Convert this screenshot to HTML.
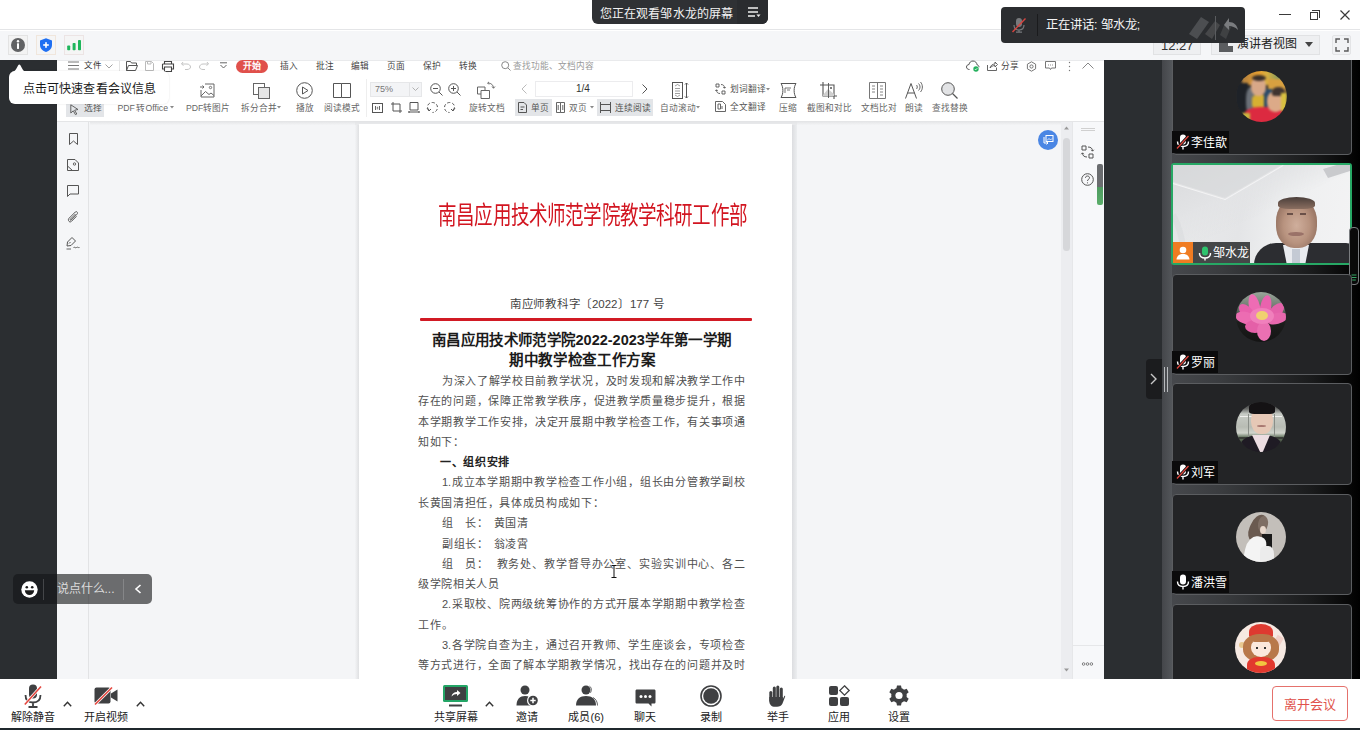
<!DOCTYPE html>
<html lang="zh-CN">
<head>
<meta charset="utf-8">
<style>
*{box-sizing:border-box}
html,body{margin:0;padding:0}
body{width:1360px;height:730px;position:relative;overflow:hidden;background:#fff;font-family:"Liberation Sans",sans-serif;color:#222}
.a{position:absolute}
.t{position:absolute;white-space:nowrap;line-height:1}
.j{text-align:justify;text-align-last:justify;white-space:nowrap}
svg{position:absolute;overflow:visible}
</style>
</head>
<body>
<!-- top white bar -->
<div class="a" style="left:0;top:0;width:1360px;height:30px;background:#fff;border-bottom:1px solid #e4e5e7"></div>
<!-- second bar -->
<div class="a" style="left:0;top:31px;width:1360px;height:29px;background:#f5f6f8"></div>

<!-- main dark -->
<div class="a" style="left:0;top:60px;width:57px;height:619px;background:#2b2e31"></div>
<div class="a" style="left:1104px;top:60px;width:58px;height:619px;background:#2b2e31"></div>


<!-- ===== top chrome ===== -->
<!-- left meeting icons -->
<div class="a" style="left:8px;top:35px;width:20px;height:20px;border:1px solid #e3e3e3;background:#f3f3f3"></div>
<svg style="left:8px;top:35px" width="20" height="20" viewBox="0 0 20 20"><circle cx="10" cy="10" r="7" fill="#616264"/><circle cx="10" cy="6.3" r="1.2" fill="#fff"/><rect x="9" y="8.3" width="2" height="5.6" fill="#fff"/></svg>
<div class="a" style="left:36px;top:35px;width:20px;height:20px;border:1px solid #f0e6dc;background:#f5f5f5"></div>
<svg style="left:36px;top:35px" width="20" height="20" viewBox="0 0 20 20"><path d="M10 3.2 L16 5.6 V10 C16 13.6 13.2 15.8 10 17 C6.8 15.8 4 13.6 4 10 V5.6 Z" fill="#1f6ff2"/><rect x="9.2" y="7.2" width="1.6" height="5.6" fill="#fff"/><rect x="7.2" y="9.2" width="5.6" height="1.6" fill="#fff"/></svg>
<div class="a" style="left:64px;top:35px;width:20px;height:20px;border:1px solid #ece4e4;background:#f5f5f5"></div>
<svg style="left:64px;top:35px" width="20" height="20" viewBox="0 0 20 20"><rect x="3.2" y="10.5" width="3" height="4.8" rx="0.8" fill="#1fb65c"/><rect x="8.6" y="8" width="3" height="7.3" rx="0.8" fill="#1fb65c"/><rect x="14" y="5" width="3" height="10.3" rx="0.8" fill="#1fb65c"/></svg>

<!-- window controls -->
<div class="a" style="left:1279px;top:14px;width:12px;height:1px;background:#3a3a3a"></div>
<div class="a" style="left:1310px;top:12px;width:8px;height:8px;border:1px solid #3a3a3a"></div>
<div class="a" style="left:1312px;top:10px;width:8px;height:8px;border-top:1px solid #3a3a3a;border-right:1px solid #3a3a3a"></div>
<svg style="left:1340px;top:10px" width="10" height="10" viewBox="0 0 10 10"><path d="M0.5 0.5 L9.5 9.5 M9.5 0.5 L0.5 9.5" stroke="#3a3a3a" stroke-width="1.2"/></svg>

<!-- time box -->
<div class="a" style="left:1153px;top:35px;width:48px;height:20px;background:#eeeff1;border:1px solid #e1e2e4"></div>
<div class="t" style="left:1161px;top:39px;font-size:13px;color:#333">12:27</div>
<!-- presenter view -->
<div class="a" style="left:1211px;top:35px;width:109px;height:20px;background:#eeeff1;border:1px solid #e1e2e4"></div>
<div class="a" style="left:1219px;top:38px;width:14px;height:14px;background:#5b5d60"></div>
<div class="a" style="left:1228px;top:38px;width:5px;height:8px;background:#eeeff1"></div>
<div class="t j" style="left:1237px;top:38px;font-size:12px;color:#222;width:59px">演讲者视图</div>
<svg style="left:1305px;top:42px" width="8" height="5" viewBox="0 0 8 5"><path d="M0 0 H8 L4 5 Z" fill="#444"/></svg>
<!-- fullscreen -->
<div class="a" style="left:1332px;top:35px;width:19px;height:20px;border:1px solid #e3e4e6;background:#f1f2f4;border-radius:2px"></div>
<svg style="left:1334px;top:37px" width="16" height="16" viewBox="0 0 16 16"><path d="M2 6 V2 H6 M10 2 H14 V6 M14 10 V14 H10 M6 14 H2 V10" stroke="#5a5a5a" stroke-width="1.4" fill="none"/></svg>

<!-- viewing pill -->
<div class="a" style="left:592px;top:0;width:176px;height:24px;background:#2f3134;border-radius:0 0 6px 6px"></div>
<div class="a" style="left:737px;top:0;width:31px;height:24px;background:#2a2c2f;border-radius:0 0 6px 0"></div>
<div class="t j" style="left:600px;top:7.5px;font-size:12px;color:#f2f2f2;width:133px">您正在观看邹水龙的屏幕</div>
<svg style="left:748px;top:7px" width="13" height="11" viewBox="0 0 13 11"><path d="M0 1 H10 M0 5 H10 M0 9 H7" stroke="#f0f0f0" stroke-width="1.3"/><path d="M8.5 7.5 H12.5 L10.5 10 Z" fill="#f0f0f0"/></svg>

<!-- speaking notice -->
<div class="a" style="left:1001px;top:7px;width:244px;height:36px;background:#2b2d30;border-radius:4px"></div>
<svg style="left:1010px;top:16px" width="18" height="18" viewBox="0 0 18 18"><rect x="6" y="2" width="6" height="9" rx="3" fill="#77797c"/><path d="M4 9 C4 12 6 14 9 14 C12 14 14 12 14 9 M9 14 V16 M6 16.2 H12" stroke="#77797c" stroke-width="1.2" fill="none"/><path d="M2.5 16 L15.5 2.5" stroke="#d8443f" stroke-width="1.4"/></svg>
<div class="a" style="left:1037px;top:14px;width:1px;height:22px;background:#1a1b1d"></div>
<div class="t j" style="left:1046px;top:19px;font-size:12.3px;color:#f4f4f4;width:94px">正在讲话: 邹水龙;</div>
<svg style="left:1187px;top:13px" width="54" height="28" viewBox="0 0 54 28"><path d="M2 21 L14 4 L22 9 L10 26 Z" fill="#4c4e51"/><path d="M18 21 L28 8 L33 12 L25 26 Z" fill="#464749"/><rect x="28" y="3" width="1" height="24" fill="#5a5c5f"/><path d="M33 22 L38 10 L44 14 L39 26 Z" fill="#3f4143"/><path d="M37 12 L42 5 L42 9 C47 9 50 12 51 17 C48 14 45 13 42 13 V17 Z" fill="#7a7c7f"/></svg>

<!-- WPS -->
<div class="a" style="left:57px;top:60px;width:1047px;height:619px;background:#f4f5f7"></div>
<!-- ===== WPS toolbar ===== -->
<div class="a" style="left:57px;top:60px;width:1047px;height:61px;background:#fff;border-top:1px solid #e9eaec"></div>
<div class="a" style="left:57px;top:121px;width:1047px;height:1px;background:#e4e5e7"></div>
<div class="a" style="left:90px;top:122px;width:982px;height:3px;background:linear-gradient(#e6e7e9,#f3f4f6)"></div>
<!-- menu row -->
<svg style="left:68px;top:61px" width="11" height="9" viewBox="0 0 11 9"><path d="M0 1 H11 M0 4.5 H11 M0 8 H11" stroke="#777" stroke-width="1"/></svg>
<div class="t j" style="left:84px;top:61px;font-size:8.5px;color:#333;width:16.5px">文件</div>
<svg style="left:105px;top:64px" width="8" height="5" viewBox="0 0 8 5"><path d="M0.5 0.5 L4 4 L7.5 0.5" stroke="#999" stroke-width="0.9" fill="none"/></svg>
<div class="a" style="left:119px;top:61px;width:1px;height:10px;background:#e4e4e4"></div>
<svg style="left:126px;top:61px" width="12" height="10" viewBox="0 0 12 10"><path d="M0.5 9.5 V0.5 H4.5 L5.5 2 H10.5 V4 M0.5 9.5 L2.5 4.5 H11.5 L9.5 9.5 Z" stroke="#555" stroke-width="1" fill="none"/></svg>
<svg style="left:145px;top:61px" width="9" height="10" viewBox="0 0 9 10"><path d="M0.5 0.5 H6.5 L8.5 2.5 V9.5 H0.5 Z M2.5 0.5 V3 H6 V0.5" stroke="#bbb" stroke-width="1" fill="none"/></svg>
<svg style="left:162px;top:61px" width="12" height="11" viewBox="0 0 12 11"><path d="M2.5 3 V0.5 H9.5 V3 M0.5 3 H11.5 V8 H9.5 M2.5 8 H0.5 V3 M2.5 6 H9.5 V10.5 H2.5 Z" stroke="#444" stroke-width="1.1" fill="none"/></svg>
<svg style="left:181px;top:61px" width="10" height="9" viewBox="0 0 10 9"><path d="M2 1 L0.5 3 L2.5 4.5 M0.8 3 H6 C8 3 9.5 4.5 9.5 6 C9.5 7.5 8 8.5 6 8.5 H4" stroke="#c4c4c4" stroke-width="1" fill="none"/></svg>
<svg style="left:199px;top:61px" width="10" height="9" viewBox="0 0 10 9"><path d="M8 1 L9.5 3 L7.5 4.5 M9.2 3 H4 C2 3 0.5 4.5 0.5 6 C0.5 7.5 2 8.5 4 8.5 H6" stroke="#c4c4c4" stroke-width="1" fill="none"/></svg>
<svg style="left:220px;top:62px" width="7" height="7" viewBox="0 0 7 7"><path d="M0 0.8 H7 M0.5 3 L3.5 6 L6.5 3" stroke="#666" stroke-width="1" fill="none"/></svg>
<div class="a" style="left:236px;top:60px;width:32px;height:13px;background:#e0504b;border-radius:7px"></div>
<div class="t j" style="left:243px;top:62px;font-size:9px;color:#fff;font-weight:bold;width:18px">开始</div>
<div class="t j" style="left:280px;top:62px;font-size:8.7px;color:#444;width:17.4px">插入</div>
<div class="t j" style="left:315.5px;top:62px;font-size:8.7px;color:#444;width:17.4px">批注</div>
<div class="t j" style="left:351px;top:62px;font-size:8.7px;color:#444;width:17.4px">编辑</div>
<div class="t j" style="left:387px;top:62px;font-size:8.7px;color:#444;width:17.4px">页面</div>
<div class="t j" style="left:423px;top:62px;font-size:8.7px;color:#444;width:17.4px">保护</div>
<div class="t j" style="left:459px;top:62px;font-size:8.7px;color:#444;width:17.4px">转换</div>
<svg style="left:501px;top:61px" width="10" height="10" viewBox="0 0 10 10"><circle cx="4.2" cy="4.2" r="3.5" stroke="#888" stroke-width="1" fill="none"/><path d="M6.8 6.8 L9.5 9.5" stroke="#888" stroke-width="1"/></svg>
<div class="t j" style="left:512.5px;top:62px;font-size:8.7px;color:#999;width:78px">查找功能、文档内容</div>
<!-- top right icons -->
<svg style="left:966px;top:60px" width="14" height="12" viewBox="0 0 14 12"><path d="M3.5 9.5 C1.5 9.5 0.5 8.3 0.5 7 C0.5 5.5 1.7 4.5 3 4.6 C3.3 2.3 5 1 7 1 C9.3 1 10.8 2.7 11 4.8 C12.3 5 13 6 13 7.2" stroke="#555" stroke-width="1" fill="none"/><circle cx="10" cy="9" r="2.7" fill="#27b15f"/><path d="M8.8 9 L9.7 9.9 L11.3 8.2" stroke="#fff" stroke-width="0.8" fill="none"/></svg>
<svg style="left:987px;top:61px" width="11" height="10" viewBox="0 0 11 10"><path d="M0.5 4 V9.5 H9.5 V6.5 M3 7 C3.5 4.5 5.5 3 8 3 V1 L10.5 3.5 L8 6 V4.5 C6 4.5 4.3 5.5 3 7 Z" stroke="#555" stroke-width="0.9" fill="none"/></svg>
<div class="t j" style="left:1001px;top:62px;font-size:8.7px;color:#444;width:17.4px">分享</div>
<svg style="left:1026px;top:61px" width="11" height="11" viewBox="0 0 11 11"><path d="M5.5 0.8 L9.6 3.2 V7.8 L5.5 10.2 L1.4 7.8 V3.2 Z" stroke="#666" stroke-width="0.9" fill="none"/><circle cx="5.5" cy="5.5" r="1.6" stroke="#666" stroke-width="0.9" fill="none"/></svg>
<svg style="left:1045px;top:61px" width="11" height="10" viewBox="0 0 11 10"><path d="M0.5 0.5 H10.5 V7 H6.5 L5.5 8.5 L4.5 7 H0.5 Z" stroke="#666" stroke-width="0.9" fill="none"/><path d="M3 4 H3.8 M5.1 4 H5.9 M7.2 4 H8" stroke="#666" stroke-width="0.9"/></svg>
<svg style="left:1068px;top:61px" width="3" height="11" viewBox="0 0 3 11"><circle cx="1.5" cy="1.5" r="0.7" fill="#777"/><circle cx="1.5" cy="5.5" r="0.7" fill="#777"/><circle cx="1.5" cy="9.5" r="0.7" fill="#777"/></svg>
<svg style="left:1082px;top:62px" width="12" height="7" viewBox="0 0 12 7"><path d="M0.5 6.5 L6 1 L11.5 6.5" stroke="#888" stroke-width="1" fill="none"/></svg>

<!-- toolbar row -->
<div class="a" style="left:66px;top:103px;width:38px;height:14px;background:#e3e5e8"></div>
<svg style="left:70px;top:104px" width="9" height="11" viewBox="0 0 9 11"><path d="M0.8 0.8 L8 5.5 L4.6 6.2 L6.8 10 L5.4 10.6 L3.3 6.8 L0.8 9 Z" stroke="#555" stroke-width="0.9" fill="none"/></svg>
<div class="t j" style="left:84px;top:104px;font-size:8.7px;color:#555;width:17.4px">选择</div>
<div class="t j" style="left:117.5px;top:104px;font-size:8.7px;color:#666;width:50.5px">PDF转Office</div>
<svg style="left:170px;top:106px" width="4" height="3" viewBox="0 0 4 3"><path d="M0 0 H4 L2 2.5Z" fill="#888"/></svg>
<svg style="left:200px;top:83px" width="15" height="15" viewBox="0 0 15 15"><path d="M5 1 H14 V14 H1 V7" stroke="#666" stroke-width="1" fill="none"/><path d="M0 4 H4 M2.5 2.5 L4 4 L2.5 5.5" stroke="#666" stroke-width="1" fill="none"/><circle cx="10.5" cy="4.5" r="1.2" stroke="#666" stroke-width="0.9" fill="none"/><path d="M1 13 L5.5 8.5 L9 11.5 L11 10 L14 12.5" stroke="#666" stroke-width="1" fill="none"/></svg>
<div class="t j" style="left:186px;top:104px;font-size:8.7px;color:#666;width:42.5px">PDF转图片</div>
<svg style="left:253px;top:83px" width="17" height="16" viewBox="0 0 17 16"><rect x="0.5" y="0.5" width="11" height="11" stroke="#666" stroke-width="1" fill="#fff"/><rect x="5.5" y="4.5" width="11" height="11" stroke="#666" stroke-width="1" fill="#e6e6e6"/></svg>
<div class="t j" style="left:241px;top:104px;font-size:8.7px;color:#666;width:35px">拆分合并</div>
<svg style="left:277px;top:106px" width="4" height="3" viewBox="0 0 4 3"><path d="M0 0 H4 L2 2.5Z" fill="#888"/></svg>
<svg style="left:296px;top:82px" width="17" height="17" viewBox="0 0 17 17"><circle cx="8.5" cy="8.5" r="7.8" stroke="#555" stroke-width="1" fill="none"/><path d="M6.5 5 L12 8.5 L6.5 12 Z" stroke="#555" stroke-width="1" fill="none"/></svg>
<div class="t j" style="left:296px;top:104px;font-size:8.7px;color:#666;width:17.4px">播放</div>
<svg style="left:333px;top:83px" width="18" height="15" viewBox="0 0 18 15"><path d="M0.5 0.5 H8.5 V14.5 H0.5 Z M8.5 0.5 H17.5 V14.5 H8.5" stroke="#555" stroke-width="1" fill="none"/></svg>
<div class="t j" style="left:324px;top:104px;font-size:8.7px;color:#666;width:35px">阅读模式</div>
<div class="a" style="left:366px;top:79px;width:1px;height:38px;background:#eeeeee"></div>
<div class="a" style="left:370px;top:82px;width:52px;height:15px;background:#f3f4f6;border:1px solid #e6e7e9"></div>
<div class="a" style="left:409px;top:83px;width:1px;height:13px;background:#e3e4e6"></div>
<div class="t" style="left:375px;top:85px;font-size:9px;color:#777">75%</div>
<svg style="left:412px;top:87px" width="7" height="4" viewBox="0 0 7 4"><path d="M0.5 0.5 L3.5 3.5 L6.5 0.5" stroke="#aaa" stroke-width="0.9" fill="none"/></svg>
<svg style="left:430px;top:83px" width="13" height="13" viewBox="0 0 13 13"><circle cx="5.5" cy="5.5" r="4.8" stroke="#555" stroke-width="1" fill="none"/><path d="M9 9 L12.5 12.5 M3 5.5 H8" stroke="#555" stroke-width="1"/></svg>
<svg style="left:448px;top:83px" width="13" height="13" viewBox="0 0 13 13"><circle cx="5.5" cy="5.5" r="4.8" stroke="#555" stroke-width="1" fill="none"/><path d="M9 9 L12.5 12.5 M3 5.5 H8 M5.5 3 V8" stroke="#555" stroke-width="1"/></svg>
<svg style="left:372px;top:103px" width="11" height="10" viewBox="0 0 11 10"><rect x="0.5" y="0.5" width="10" height="9" stroke="#555" stroke-width="1" fill="none"/><path d="M3.5 3 V7 M7.5 3 V7 M4.8 4.3 H6.2 M4.8 5.8 H6.2" stroke="#555" stroke-width="0.9"/></svg>
<svg style="left:391px;top:102px" width="11" height="11" viewBox="0 0 11 11"><path d="M2 2 H9 V9 H2 Z M0 2 H2 M2 0 V2 M9 9 H11 M9 9 V11" stroke="#555" stroke-width="1" fill="none"/></svg>
<svg style="left:408px;top:102px" width="12" height="11" viewBox="0 0 12 11"><path d="M2 0.5 H10 V8 H2 Z M0.5 10 H11.5 M1.5 9 L0.5 10 L1.5 11 M10.5 9 L11.5 10 L10.5 11" stroke="#555" stroke-width="1" fill="none"/></svg>
<svg style="left:427px;top:102px" width="11" height="11" viewBox="0 0 11 11"><path d="M2 8 C1 7 0.5 6 0.5 5 C0.5 2.5 2.5 0.5 5.5 0.5 C8 0.5 10.5 2.5 10.5 5.5 C10.5 8 8.5 10.5 5.5 10.5" stroke="#555" stroke-width="1" fill="none" stroke-dasharray="3 2"/><path d="M0 6 L2 9 L4 7" stroke="#555" stroke-width="1" fill="none"/></svg>
<svg style="left:444px;top:102px" width="11" height="11" viewBox="0 0 11 11"><path d="M9 8 C10 7 10.5 6 10.5 5 C10.5 2.5 8.5 0.5 5.5 0.5 C3 0.5 0.5 2.5 0.5 5.5 C0.5 8 2.5 10.5 5.5 10.5" stroke="#555" stroke-width="1" fill="none" stroke-dasharray="3 2"/><path d="M11 6 L9 9 L7 7" stroke="#555" stroke-width="1" fill="none"/></svg>
<svg style="left:477px;top:82px" width="19" height="17" viewBox="0 0 19 17"><path d="M0.5 5 H8 V12 H0.5 Z" stroke="#666" stroke-width="1" fill="none"/><path d="M4 8.5 H12.5 V16.5 H4 Z" stroke="#666" stroke-width="1" fill="#fff"/><path d="M11 1 C14 1 16.5 3 16.5 6 M15 4.5 L16.5 6.3 L18 4.5 M12 0 L10.5 1 L12 2.5" stroke="#666" stroke-width="0.9" fill="none"/></svg>
<div class="t j" style="left:469px;top:104px;font-size:8.7px;color:#666;width:35px">旋转文档</div>
<svg style="left:521px;top:84px" width="6" height="10" viewBox="0 0 6 10"><path d="M5.5 0.5 L1 5 L5.5 9.5" stroke="#bbb" stroke-width="1" fill="none"/></svg>
<div class="a" style="left:535px;top:81px;width:98px;height:16px;background:#fff;border:1px solid #ececee"></div>
<div class="t" style="left:576px;top:84px;font-size:10px;color:#333">1/4</div>
<svg style="left:642px;top:84px" width="6" height="10" viewBox="0 0 6 10"><path d="M0.5 0.5 L5 5 L0.5 9.5" stroke="#555" stroke-width="1" fill="none"/></svg>
<div class="a" style="left:515px;top:99px;width:37px;height:17px;background:#e3e5e8"></div>
<svg style="left:518px;top:102px" width="9" height="11" viewBox="0 0 9 11"><path d="M0.5 0.5 H6 L8.5 3 V10.5 H0.5 Z M2.5 5 H6.5 M2.5 7.5 H5" stroke="#555" stroke-width="1" fill="none"/></svg>
<div class="t j" style="left:531px;top:104px;font-size:8.7px;color:#555;width:17.4px">单页</div>
<svg style="left:556px;top:102px" width="9" height="11" viewBox="0 0 9 11"><path d="M0.5 0.5 H4.5 V10.5 H0.5 Z M4.5 0.5 H8.5 V10.5 H4.5 M2.2 3 V8 M6.8 3 V8" stroke="#555" stroke-width="0.9" fill="none"/></svg>
<div class="t j" style="left:569px;top:104px;font-size:8.7px;color:#666;width:17.4px">双页</div>
<svg style="left:590px;top:106px" width="4" height="3" viewBox="0 0 4 3"><path d="M0 0 H4 L2 2.5Z" fill="#888"/></svg>
<div class="a" style="left:597px;top:99px;width:56px;height:17px;background:#e3e5e8"></div>
<svg style="left:600px;top:102px" width="11" height="11" viewBox="0 0 11 11"><path d="M0.5 0 V11 M10.5 0 V11 M0.5 2.5 H10.5 M0.5 8.5 H10.5" stroke="#555" stroke-width="1" fill="none"/></svg>
<div class="t j" style="left:615px;top:104px;font-size:8.7px;color:#555;width:35px">连续阅读</div>
<svg style="left:672px;top:82px" width="17" height="17" viewBox="0 0 17 17"><rect x="0.5" y="0.5" width="10" height="16" stroke="#555" stroke-width="1" fill="none"/><path d="M3 4 L5.5 2.5 L8 4 M3 6.5 H8 M3 9 H8 M3 11.5 H8 M3 13 L5.5 14.5 L8 13" stroke="#777" stroke-width="0.7" fill="none"/><path d="M14.5 1 V16 M13 2.5 L14.5 1 L16 2.5 M13 14.5 L14.5 16 L16 14.5" stroke="#555" stroke-width="1" fill="none"/></svg>
<div class="t j" style="left:659.5px;top:104px;font-size:8.7px;color:#666;width:35px">自动滚动</div>
<svg style="left:696px;top:106px" width="4" height="3" viewBox="0 0 4 3"><path d="M0 0 H4 L2 2.5Z" fill="#888"/></svg>
<svg style="left:715px;top:83px" width="11" height="12" viewBox="0 0 11 12"><path d="M1 1 H4 V4 H1 Z M7 8 H10 V11 H7 Z M6 1.5 C8.5 1.5 9.5 3 9.5 5 M8.3 4 L9.5 5.3 L10.7 4 M5 10.5 C2.5 10.5 1.5 9 1.5 7 M0.3 8 L1.5 6.7 L2.7 8" stroke="#555" stroke-width="0.9" fill="none"/></svg>
<div class="t j" style="left:730px;top:85px;font-size:8.7px;color:#555;width:34.8px">划词翻译</div>
<svg style="left:766px;top:88px" width="4" height="3" viewBox="0 0 4 3"><path d="M0 0 H4 L2 2.5Z" fill="#888"/></svg>
<svg style="left:715px;top:101px" width="11" height="11" viewBox="0 0 11 11"><path d="M0.5 0.5 H7.5 L10.5 3.5 V10.5 H0.5 Z M3 3 H5.5 V8 H3 Z M7 5 V8" stroke="#555" stroke-width="0.9" fill="none"/></svg>
<div class="t j" style="left:730px;top:103px;font-size:8.7px;color:#555;width:34.8px">全文翻译</div>
<svg style="left:780px;top:83px" width="17" height="15" viewBox="0 0 17 15"><path d="M1 0.5 C3.5 4 3.5 11 1 14.5 M16 0.5 C13.5 4 13.5 11 16 14.5 M1 0.5 H16 M1 14.5 H16" stroke="#555" stroke-width="1" fill="none"/><path d="M5 5 H11 M5 5 V10 M7 7 H10" stroke="#555" stroke-width="0.8" fill="none"/></svg>
<div class="t j" style="left:779px;top:104px;font-size:8.7px;color:#666;width:17.4px">压缩</div>
<svg style="left:820px;top:82px" width="17" height="17" viewBox="0 0 17 17"><path d="M3 0 V14 H17 M0 3 H14 V17" stroke="#555" stroke-width="1.1" fill="none"/><path d="M3 13 L8 7 L14 12 V14 H3 Z" fill="#cfcfcf"/><path d="M8.5 1 V16" stroke="#555" stroke-width="0.9"/><circle cx="11" cy="6" r="1" fill="#555"/></svg>
<div class="t j" style="left:807px;top:104px;font-size:8.7px;color:#666;width:43.5px">截图和对比</div>
<svg style="left:869px;top:82px" width="17" height="17" viewBox="0 0 17 17"><path d="M0.5 0.5 H16.5 V16.5 H0.5 Z M8.5 0 V17" stroke="#777" stroke-width="1" fill="none"/><path d="M3 4 H6 M3 7 H6 M3 10 H6 M11 4 H14 M11 7 H14 M11 10 H14 M11 13 H14" stroke="#777" stroke-width="0.9"/></svg>
<div class="t j" style="left:861px;top:104px;font-size:8.7px;color:#666;width:34.8px">文档比对</div>
<svg style="left:905px;top:82px" width="18" height="17" viewBox="0 0 18 17"><path d="M0.5 16.5 L6 1.5 L11.5 16.5 M2.5 11 H9.5" stroke="#555" stroke-width="1" fill="none"/><path d="M11.5 3 C12.5 4 12.5 6 11.5 7 M13.5 1.5 C15.5 3.5 15.5 6.5 13.5 8.5 M15.5 0 C18 3 18 7 15.5 10" stroke="#555" stroke-width="0.9" fill="none"/></svg>
<div class="t j" style="left:905px;top:104px;font-size:8.7px;color:#666;width:17.4px">朗读</div>
<svg style="left:941px;top:82px" width="17" height="17" viewBox="0 0 17 17"><circle cx="7" cy="7" r="6.3" stroke="#555" stroke-width="1" fill="#e2e3e5"/><path d="M11.5 11.5 L16.5 16.5" stroke="#555" stroke-width="1.2"/></svg>
<div class="t j" style="left:932px;top:104px;font-size:8.7px;color:#666;width:34.8px">查找替换</div>

<!-- sidebar -->
<div class="a" style="left:57px;top:122px;width:32px;height:557px;background:#f5f6f8;border-right:1px solid #e2e3e5"></div>
<svg style="left:68.5px;top:133px" width="9" height="12" viewBox="0 0 9 12"><path d="M0.5 0.5 H8.5 V11.5 L4.5 8 L0.5 11.5 Z" stroke="#555" stroke-width="1" fill="none"/></svg>
<svg style="left:67px;top:159px" width="12" height="12" viewBox="0 0 12 12"><path d="M0.5 0.5 H8 L11.5 4 V11.5 H0.5 Z" stroke="#555" stroke-width="1" fill="none"/><circle cx="7.5" cy="5" r="1.2" stroke="#555" stroke-width="0.9" fill="none"/><path d="M0.5 7 L5.5 11.5" stroke="#555" stroke-width="1"/></svg>
<svg style="left:67px;top:185px" width="12" height="12" viewBox="0 0 12 12"><path d="M0.5 0.5 H11.5 V9 H3 L0.5 11.5 Z" stroke="#555" stroke-width="1" fill="none"/></svg>
<svg style="left:67px;top:211px" width="12" height="12" viewBox="0 0 12 12"><path d="M8.5 3 L3.5 8 C2.8 8.7 3.3 9.7 4.1 9.1 L10 3.2 C11.2 2 10 -0.3 8.3 1 L2 7.3 C0.3 9 2.5 12.3 4.5 10.3 L9.5 5.3" stroke="#555" stroke-width="1" fill="none"/></svg>
<svg style="left:66px;top:237px" width="14" height="13" viewBox="0 0 14 13"><path d="M6 0.5 L9.5 4 L5 8.5 L1 9 L1.5 5 Z M3 6.5 L4.5 5" stroke="#555" stroke-width="1" fill="none"/><path d="M7.5 10.5 C8.5 9.5 9.5 11.5 10.5 10.5 C11.5 9.5 12 11 13.5 10.5 M0.5 12 H5" stroke="#555" stroke-width="0.9" fill="none"/></svg>

<!-- page -->
<div class="a" style="left:355px;top:122px;width:442px;height:557px;background:linear-gradient(90deg,#f3f4f6 0,#dfe0e2 4px,#f3f4f6 4px,#f3f4f6 437px,#dcdde0 437px,#eceef0 442px)"></div>
<div class="a" style="left:355px;top:121px;width:442px;height:4px;background:linear-gradient(#e2e3e5,#eaebed)"></div>
<div class="a" style="left:359px;top:124px;width:433px;height:555px;background:#fff"></div>

<!-- ===== document content ===== -->
<div class="t j" style="left:437.5px;top:204px;width:408px;font-size:24.5px;color:#d21520;transform:scaleX(0.757);transform-origin:0 0">南昌应用技术师范学院教学科研工作部</div>
<div class="t j" style="left:510px;top:299px;width:154px;font-size:11.5px;color:#444">南应师教科字〔2022〕177 号</div>
<div class="a" style="left:420px;top:318px;width:332px;height:3px;background:#d11a24;border-radius:1px"></div>
<div class="t j" style="left:432px;top:332.5px;width:299px;font-size:14.5px;color:#1a1a1a;font-weight:bold">南昌应用技术师范学院2022-2023学年第一学期</div>
<div class="t j" style="left:509px;top:353px;width:146px;font-size:14.5px;color:#1a1a1a;font-weight:bold">期中教学检查工作方案</div>
<div id="body" style="font-size:11px;color:#505050">
<div class="t j" style="left:442px;top:375.5px;width:303px">为深入了解学校目前教学状况，及时发现和解决教学工作中</div>
<div class="t j" style="left:418px;top:396px;width:327px">存在的问题，保障正常教学秩序，促进教学质量稳步提升，根据</div>
<div class="t j" style="left:418px;top:416.5px;width:327px">本学期教学工作安排，决定开展期中教学检查工作，有关事项通</div>
<div class="t j" style="left:418px;top:436.5px;width:46.2px">知如下：</div>
<div class="t j" style="left:440px;top:456.5px;font-weight:bold;color:#222;width:69.4px">一、组织安排</div>
<div class="t j" style="left:442px;top:477px;width:303px">1.成立本学期期中教学检查工作小组，组长由分管教学副校</div>
<div class="t j" style="left:418px;top:497.5px;width:185.6px">长黄国清担任，具体成员构成如下：</div>
<div class="t j" style="left:442px;top:518px;width:46.2px">组　长：</div><div class="t j" style="left:493.5px;top:518px;width:34.6px">黄国清</div>
<div class="t j" style="left:442px;top:538.5px;width:46.2px">副组长：</div><div class="t j" style="left:493.5px;top:538.5px;width:34.6px">翁凌霄</div>
<div class="t j" style="left:442px;top:558.5px;width:46.2px">组　员：</div><div class="t j" style="left:496.5px;top:558.5px;width:248.5px">教务处、教学督导办公室、实验实训中心、各二</div>
<div class="t j" style="left:418px;top:578.5px;width:81.0px">级学院相关人员</div>
<div class="t j" style="left:442px;top:599px;width:303px">2.采取校、院两级统筹协作的方式开展本学期期中教学检查</div>
<div class="t j" style="left:418px;top:619.5px;width:34.6px">工作。</div>
<div class="t j" style="left:442px;top:640px;width:303px">3.各学院自查为主，通过召开教师、学生座谈会，专项检查</div>
<div class="t j" style="left:418px;top:659.5px;width:327px">等方式进行，全面了解本学期教学情况，找出存在的问题并及时</div>
</div>
<svg style="left:611px;top:565px" width="6" height="13" viewBox="0 0 6 13"><path d="M0.5 0.5 H5.5 M3 0.5 V12.5 M0.5 12.5 H5.5" stroke="#111" stroke-width="1" fill="none"/></svg>

<!-- right of doc: blue button, scrollbar, panel -->
<div class="a" style="left:1038px;top:130px;width:20px;height:20px;border-radius:50%;background:#4a86e4"></div>
<svg style="left:1042px;top:134px" width="12" height="12" viewBox="0 0 12 12"><rect x="4" y="1.5" width="7" height="6" stroke="#fff" stroke-width="1" fill="none"/><path d="M5 6.5 L7 4.5 L8.5 6 L10 4.5" stroke="#fff" stroke-width="0.8" fill="none"/><path d="M2 3 V9 H6 M4.5 7.5 L6 9 L4.5 10.5" stroke="#fff" stroke-width="1" fill="none"/></svg>
<div class="a" style="left:1061px;top:122px;width:11px;height:557px;background:#ecedf0"></div>
<div class="a" style="left:1063px;top:138px;width:7px;height:113px;border-radius:3.5px;background:#d6d7da"></div>
<svg style="left:1064px;top:126px" width="5" height="4" viewBox="0 0 5 4"><path d="M0 3.5 L2.5 0.5 L5 3.5Z" fill="#999"/></svg>
<svg style="left:1064px;top:668px" width="5" height="4" viewBox="0 0 5 4"><path d="M0 0.5 L2.5 3.5 L5 0.5Z" fill="#999"/></svg>
<div class="a" style="left:1072px;top:122px;width:32px;height:557px;background:#f7f8fa;border-left:1px solid #e6e7e9"></div>
<div class="a" style="left:1081px;top:128px;width:14px;height:1px;background:#d0d0d0"></div>
<div class="a" style="left:1081px;top:130px;width:14px;height:1px;background:#d0d0d0"></div>
<svg style="left:1081px;top:145px" width="13" height="14" viewBox="0 0 13 14"><path d="M1 1 H5 V5 H1 Z M8 9 H12 V13 H8 Z M7 2 C10 2 11.5 3.5 11.5 6 M10.2 4.8 L11.5 6.2 L12.8 4.8 M6 12 C3 12 1.5 10.5 1.5 8 M0.2 9.2 L1.5 7.8 L2.8 9.2" stroke="#555" stroke-width="1" fill="none"/></svg>
<svg style="left:1081px;top:173px" width="13" height="13" viewBox="0 0 13 13"><circle cx="6.5" cy="6.5" r="5.8" stroke="#555" stroke-width="1" fill="none"/><path d="M4.5 4.8 C4.5 3.5 5.5 3 6.5 3 C7.5 3 8.5 3.7 8.5 4.8 C8.5 6.2 6.5 6.3 6.5 8" stroke="#555" stroke-width="1" fill="none"/><circle cx="6.5" cy="9.8" r="0.6" fill="#555"/></svg>
<div class="a" style="left:1097px;top:164px;width:6px;height:41px;border-radius:2px;background:linear-gradient(#6a6c6f 0,#6a6c6f 55%,#4f9a60 55%,#5aae6a 100%)"></div>
<div class="a" style="left:1073px;top:645px;width:31px;height:1px;background:#e6e7e9"></div>
<svg style="left:1082px;top:662px" width="11" height="4" viewBox="0 0 11 4"><circle cx="1.6" cy="2" r="1.3" stroke="#666" stroke-width="0.8" fill="none"/><circle cx="5.5" cy="2" r="1.3" stroke="#666" stroke-width="0.8" fill="none"/><circle cx="9.4" cy="2" r="1.3" stroke="#666" stroke-width="0.8" fill="none"/></svg>


<!-- participants -->
<div class="a" style="left:0;top:60px;width:1360px;height:619px;overflow:hidden"><div class="a" style="left:0;top:-60px;width:1360px;height:730px">
<!-- ===== participants ===== -->
<div class="a" style="left:1162px;top:60px;width:198px;height:619px;background:linear-gradient(90deg,#4d4f53 0px,#46484c 10px,#3a3c3f 60px,#1a1b1c 150px,#050505 190px,#000 198px)"></div>
<div class="a" style="left:1162px;top:60px;width:10px;height:619px;background:linear-gradient(90deg,#44464a,#53565a)"></div>
<!-- card 1 -->
<div class="a" style="left:1172px;top:50px;width:180px;height:105px;background:#232426;border:1px solid #5b5d60;border-radius:4px"></div>
<div class="a" style="left:1236px;top:71px;width:51px;height:51px;border-radius:50%;overflow:hidden;background:#2e2c2a">
 <div class="a" style="left:0;top:0;width:51px;height:51px;filter:blur(0.9px)">
  <div class="a" style="left:6px;top:-2px;width:42px;height:16px;background:linear-gradient(90deg,#b08040,#e8a030 40%,#d8b040 60%,#60906a)"></div>
  <div class="a" style="left:32px;top:8px;width:18px;height:16px;background:#d8a040"></div>
  <div class="a" style="left:0;top:12px;width:12px;height:40px;background:#1e2228"></div>
  <div class="a" style="left:10px;top:16px;width:12px;height:28px;border-radius:40%;background:#6a7078"></div>
  <div class="a" style="left:16px;top:24px;width:16px;height:14px;border-radius:30%;background:#d6b032"></div>
  <div class="a" style="left:28px;top:18px;width:8px;height:20px;background:#2a4a68"></div>
  <div class="a" style="left:15px;top:6px;width:15px;height:19px;border-radius:45%;background:#d8a888"></div>
  <div class="a" style="left:16px;top:4px;width:14px;height:6px;border-radius:50%;background:#3a302a"></div>
  <div class="a" style="left:8px;top:36px;width:40px;height:20px;border-radius:40% 40% 0 0;background:#dc2a40"></div>
  <div class="a" style="left:31px;top:20px;width:17px;height:21px;border-radius:45%;background:#dcaa88"></div>
  <div class="a" style="left:36px;top:16px;width:13px;height:9px;border-radius:50% 50% 20% 20%;background:#403430"></div>
  <div class="a" style="left:45px;top:22px;width:6px;height:18px;background:#d8c040"></div>
  <div class="a" style="left:6px;top:42px;width:8px;height:8px;background:#c8b840"></div>
 </div>
</div>
<div class="a" style="left:1172px;top:131px;width:57px;height:22px;background:#0b0b0c"></div>
<div class="t j" style="left:1191px;top:137px;font-size:12px;color:#fff;width:36px">李佳歆</div>
<!-- card 2 (active video) -->
<div class="a" style="left:1171px;top:163px;width:181px;height:102px;border:2px solid #27a865;border-radius:3px;background:#ececee"></div>
<div class="a" style="left:1173px;top:165px;width:177px;height:98px;overflow:hidden;background:linear-gradient(100deg,#e9eaeb 0%,#e4e5e7 40%,#eeeff0 60%,#f3f3f4 100%)">
 <div class="a" style="left:0;top:0;width:100%;height:100%;filter:blur(0.5px)">
  <div class="a" style="left:0;top:0;width:177px;height:98px;background:linear-gradient(155deg,#d9dadc 0%,#e2e3e5 30%,rgba(230,231,233,0) 50%)"></div>
  <svg style="left:0;top:0" width="177" height="98" viewBox="0 0 177 98"><path d="M0 18 L52 34 L110 0" stroke="#f4f4f5" stroke-width="2" fill="none"/><path d="M0 18 L52 34 L110 0 H0 Z" fill="#d6d7d9" opacity=".55"/><path d="M0 50 C6 60 10 75 12 98" stroke="#d8d9db" stroke-width="6" fill="none" opacity=".5"/><path d="M150 4 L177 -4 V6 L155 13 Z" fill="#c9cacd"/></svg>
  <div class="a" style="left:81px;top:78px;width:100px;height:24px;background:#2c2d31;border-radius:22px 8px 0 0"></div>
  <div class="a" style="left:110px;top:80px;width:26px;height:20px;background:#e9ebef;clip-path:polygon(0 0,100% 0,85% 100%,15% 100%)"></div>
  <div class="a" style="left:119px;top:84px;width:8px;height:16px;background:#c4cad4"></div>
  <div class="a" style="left:103px;top:33px;width:41px;height:50px;border-radius:46% 46% 44% 44%;background:radial-gradient(ellipse at 50% 55%,#cfae9c 0%,#b8937f 45%,#8c6a5a 85%)"></div>
  <div class="a" style="left:105px;top:32px;width:37px;height:12px;border-radius:50% 50% 30% 30%;background:linear-gradient(#4a3e3a,#8a6e60)"></div>
  <div class="a" style="left:114px;top:48px;width:6px;height:2px;background:#6a5048"></div>
  <div class="a" style="left:127px;top:48px;width:6px;height:2px;background:#6a5048"></div>
  <div class="a" style="left:115px;top:67px;width:16px;height:4px;border-radius:50%;background:#9a7268"></div>
 </div>
</div>
<div class="a" style="left:1173px;top:242px;width:20px;height:21px;background:#f07c22"></div>
<svg style="left:1175px;top:244px" width="16" height="17" viewBox="0 0 16 17"><circle cx="8" cy="6" r="3.3" fill="#fff"/><path d="M1.5 15.5 C2 11.5 4.5 10 8 10 C11.5 10 14 11.5 14.5 15.5 Z" fill="#fff"/></svg>
<div class="a" style="left:1193px;top:242px;width:57px;height:21px;background:rgba(40,42,44,.85)"></div>
<svg style="left:1198px;top:246px" width="14" height="15" viewBox="0 0 14 15"><rect x="4" y="0.5" width="6" height="9" rx="3" fill="#2ec46e"/><path d="M1.5 7 C1.5 10.5 3.8 12 7 12 C10.2 12 12.5 10.5 12.5 7 M7 12 V14.5" stroke="#fff" stroke-width="1.4" fill="none"/></svg>
<div class="t j" style="left:1213px;top:247px;font-size:12px;color:#fff;width:36px">邹水龙</div>
<!-- scroll indicator -->
<div class="a" style="left:1349px;top:227px;width:10px;height:58px;border:1px solid #7a7c7f;border-radius:4px;background:#0a0a0a"></div>
<svg style="left:1351px;top:274px" width="6" height="8" viewBox="0 0 6 8"><path d="M0.5 1 H5.5 M0.5 3.5 H5.5 M1.2 6 H4.8" stroke="#3cb870" stroke-width="0.9"/></svg>
<!-- card 3 -->
<div class="a" style="left:1172px;top:274px;width:180px;height:101px;background:#232426;border:1px solid #5b5d60;border-radius:4px"></div>
<div class="a" style="left:1236px;top:292px;width:50px;height:50px;border-radius:50%;overflow:hidden;background:linear-gradient(#9aa69a 0%,#6f7a70 30%,#1c1e1c 60%,#141414 100%)">
 <div class="a" style="left:0;top:0;width:100%;height:100%;filter:blur(0.6px)">
  <div class="a" style="left:13px;top:2px;width:11px;height:26px;border-radius:50%;background:#ee6cb4;transform:rotate(-12deg)"></div>
  <div class="a" style="left:24px;top:3px;width:11px;height:26px;border-radius:50%;background:#ea62ae;transform:rotate(10deg)"></div>
  <div class="a" style="left:6px;top:10px;width:12px;height:24px;border-radius:50%;background:#e860ac;transform:rotate(-40deg)"></div>
  <div class="a" style="left:33px;top:9px;width:12px;height:24px;border-radius:50%;background:#e462aa;transform:rotate(40deg)"></div>
  <div class="a" style="left:-1px;top:20px;width:22px;height:12px;border-radius:50%;background:#ec6cb2;transform:rotate(15deg)"></div>
  <div class="a" style="left:30px;top:21px;width:22px;height:11px;border-radius:50%;background:#e868ae;transform:rotate(-15deg)"></div>
  <div class="a" style="left:9px;top:28px;width:20px;height:13px;border-radius:50%;background:#e460a8"></div>
  <div class="a" style="left:21px;top:29px;width:14px;height:20px;border-radius:50%;background:#ea70b2"></div>
  <div class="a" style="left:14px;top:16px;width:24px;height:16px;border-radius:50%;background:#f080bc"></div>
  <div class="a" style="left:20px;top:19px;width:12px;height:9px;border-radius:50%;background:#f0d070"></div>
 </div>
</div>
<div class="a" style="left:1172px;top:351px;width:46px;height:22px;background:#0b0b0c"></div>
<div class="t j" style="left:1191px;top:357px;font-size:12px;color:#fff;width:24px">罗丽</div>
<!-- card 4 -->
<div class="a" style="left:1172px;top:383px;width:180px;height:102px;background:#232426;border:1px solid #5b5d60;border-radius:4px"></div>
<div class="a" style="left:1236px;top:402px;width:50px;height:50px;border-radius:50%;overflow:hidden;background:linear-gradient(#2a2a2c 0%,#6a6c6a 14%,#c8ccc6 24%,#b8bcb4 50%,#d0d4cc 62%,#6a7a66 70%,#4a5646 78%,#1e1c20 90%)">
 <div class="a" style="left:0;top:0;width:100%;height:100%;filter:blur(0.6px)">
  <div class="a" style="left:4px;top:14px;width:42px;height:1px;background:#f0f0ee"></div>
  <div class="a" style="left:12px;top:12px;width:1px;height:24px;background:#8a8e88"></div>
  <div class="a" style="left:38px;top:12px;width:1px;height:24px;background:#8a8e88"></div>
  <div class="a" style="left:2px;top:35px;width:46px;height:2px;background:#3a3e38"></div>
  <div class="a" style="left:5px;top:33px;width:40px;height:20px;border-radius:45% 45% 0 0;background:#1f1b24"></div>
  <div class="a" style="left:16px;top:33px;width:18px;height:17px;background:#ecdde2;clip-path:polygon(0 0,100% 0,60% 100%,45% 100%)"></div>
  <div class="a" style="left:15px;top:5px;width:22px;height:27px;border-radius:45% 45% 45% 45%;background:#e6c8b6"></div>
  <div class="a" style="left:13px;top:0px;width:26px;height:12px;border-radius:40% 40% 20% 20%;background:#141214"></div>
  <div class="a" style="left:21px;top:23px;width:9px;height:2px;border-radius:50%;background:#a87870"></div>
 </div>
</div>
<div class="a" style="left:1172px;top:461px;width:46px;height:22px;background:#0b0b0c"></div>
<div class="t j" style="left:1191px;top:467px;font-size:12px;color:#fff;width:24px">刘军</div>
<!-- card 5 -->
<div class="a" style="left:1172px;top:494px;width:180px;height:101px;background:#232426;border:1px solid #5b5d60;border-radius:4px"></div>
<div class="a" style="left:1236px;top:512px;width:50px;height:50px;border-radius:50%;overflow:hidden;background:#c3bfba">
 <div class="a" style="left:0;top:0;width:100%;height:100%;filter:blur(0.6px)">
  <div class="a" style="left:14px;top:2px;width:16px;height:28px;border-radius:50% 50% 40% 40%;background:#6a5a50;transform:rotate(22deg)"></div>
  <div class="a" style="left:22px;top:4px;width:10px;height:16px;border-radius:50%;background:#7e6e64;transform:rotate(10deg)"></div>
  <div class="a" style="left:26px;top:22px;width:10px;height:16px;background:#1a1a1a"></div>
  <div class="a" style="left:9px;top:24px;width:20px;height:30px;border-radius:50% 30% 0 0;background:#f4f4f4;transform:rotate(12deg)"></div>
  <div class="a" style="left:24px;top:34px;width:14px;height:20px;border-radius:30% 40% 0 0;background:#ececec"></div>
  <div class="a" style="left:24px;top:14px;width:6px;height:8px;border-radius:50%;background:#e8d8cc"></div>
 </div>
</div>
<div class="a" style="left:1172px;top:571px;width:57px;height:22px;background:#0b0b0c"></div>
<svg style="left:1176px;top:574px" width="14" height="16" viewBox="0 0 14 16"><rect x="4" y="0.5" width="6" height="10" rx="3" fill="#fff"/><path d="M1.5 7.5 C1.5 11 3.8 12.5 7 12.5 C10.2 12.5 12.5 11 12.5 7.5 M7 12.5 V15.5" stroke="#fff" stroke-width="1.4" fill="none"/></svg>
<div class="t j" style="left:1191px;top:577px;font-size:12px;color:#fff;width:36px">潘洪雪</div>
<!-- card 6 -->
<div class="a" style="left:1172px;top:604px;width:180px;height:101px;background:#232426;border:1px solid #5b5d60;border-radius:4px"></div>
<div class="a" style="left:1235px;top:622px;width:51px;height:51px;border-radius:50%;overflow:hidden;background:#f6e9e2">
 <div class="a" style="left:0;top:0;width:100%;height:100%;filter:blur(0.6px)">
  <div class="a" style="left:4px;top:20px;width:6px;height:6px;border-radius:50%;background:#e8c890"></div>
  <div class="a" style="left:40px;top:14px;width:7px;height:9px;background:#f0d0c8;transform:rotate(30deg)"></div>
  <div class="a" style="left:14px;top:2px;width:24px;height:16px;border-radius:50% 50% 30% 30%;background:#de3a30"></div>
  <div class="a" style="left:8px;top:12px;width:36px;height:28px;border-radius:45%;background:#b8784a"></div>
  <div class="a" style="left:16px;top:17px;width:20px;height:18px;border-radius:45% 45% 50% 50%;background:#fbe8dc"></div>
  <div class="a" style="left:16px;top:13px;width:20px;height:7px;border-radius:30%;background:#b8784a"></div>
  <div class="a" style="left:21px;top:25px;width:2px;height:2px;background:#333"></div>
  <div class="a" style="left:29px;top:25px;width:2px;height:2px;background:#333"></div>
  <div class="a" style="left:12px;top:35px;width:28px;height:20px;border-radius:40% 40% 0 0;background:#e2392e"></div>
  <div class="a" style="left:20px;top:39px;width:12px;height:5px;border-radius:50%;background:#f2c640"></div>
 </div>
</div>
<svg style="left:1176px;top:134px" width="14" height="16" viewBox="0 0 14 16"><rect x="4" y="0.5" width="6" height="10" rx="3" fill="#fff"/><path d="M1.5 7.5 C1.5 11 3.8 12.5 7 12.5 C10.2 12.5 12.5 11 12.5 7.5 M7 12.5 V15.5" stroke="#fff" stroke-width="1.4" fill="none"/><path d="M1 14.5 L12.5 2" stroke="#0b0b0c" stroke-width="3"/><path d="M1 14.5 L12.5 2" stroke="#e0463c" stroke-width="1.3"/></svg>
<svg style="left:1176px;top:354px" width="14" height="16" viewBox="0 0 14 16"><rect x="4" y="0.5" width="6" height="10" rx="3" fill="#fff"/><path d="M1.5 7.5 C1.5 11 3.8 12.5 7 12.5 C10.2 12.5 12.5 11 12.5 7.5 M7 12.5 V15.5" stroke="#fff" stroke-width="1.4" fill="none"/><path d="M1 14.5 L12.5 2" stroke="#0b0b0c" stroke-width="3"/><path d="M1 14.5 L12.5 2" stroke="#e0463c" stroke-width="1.3"/></svg>
<svg style="left:1176px;top:464px" width="14" height="16" viewBox="0 0 14 16"><rect x="4" y="0.5" width="6" height="10" rx="3" fill="#fff"/><path d="M1.5 7.5 C1.5 11 3.8 12.5 7 12.5 C10.2 12.5 12.5 11 12.5 7.5 M7 12.5 V15.5" stroke="#fff" stroke-width="1.4" fill="none"/><path d="M1 14.5 L12.5 2" stroke="#0b0b0c" stroke-width="3"/><path d="M1 14.5 L12.5 2" stroke="#e0463c" stroke-width="1.3"/></svg>


</div></div>
<!-- bottom bar -->
<div class="a" style="left:0;top:679px;width:1360px;height:49px;background:#fff"></div>
<div class="a" style="left:0;top:728px;width:1360px;height:2px;background:#1f282d"></div>

<!-- collapse tab -->
<div class="a" style="left:1146px;top:359px;width:16px;height:40px;background:#1b1c1e;border-radius:4px 0 0 4px"></div>
<svg style="left:1150px;top:373px" width="7" height="12" viewBox="0 0 7 12"><path d="M1 1 L6 6 L1 11" stroke="#c8c8c8" stroke-width="1.4" fill="none"/></svg>
<div class="a" style="left:1164px;top:367px;width:1px;height:25px;background:#b8babd"></div>
<div class="a" style="left:1167px;top:367px;width:1px;height:25px;background:#b8babd"></div>

<!-- tooltip -->
<div class="a" style="left:9px;top:71px;width:160px;height:33px;background:#fff;border-radius:6px;box-shadow:0 0 2px rgba(0,0,0,.12)"></div>
<svg style="left:10px;top:62px" width="18" height="10" viewBox="0 0 18 10"><path d="M1 10 C4 10 5 9 7 5.5 L8.2 3.3 C8.8 2.3 9.8 2.3 10.4 3.3 L11.6 5.5 C13.5 9 14.5 10 17 10 Z" fill="#fff"/></svg>
<div class="t j" style="left:23px;top:82.5px;font-size:12px;color:#1a1a1a;width:133px">点击可快速查看会议信息</div>

<!-- chat input -->
<div class="a" style="left:13px;top:574px;width:139px;height:30px;background:rgba(20,21,23,.61);border-radius:5px"></div>
<svg style="left:21px;top:581px" width="17" height="17" viewBox="0 0 17 17"><circle cx="8.5" cy="8.5" r="8.2" fill="#fff"/><circle cx="5.8" cy="6.3" r="1.3" fill="#1c1c1c"/><circle cx="11.2" cy="6.3" r="1.3" fill="#1c1c1c"/><path d="M3.8 9.2 H13.2 C13 12.2 11 14 8.5 14 C6 14 4 12.2 3.8 9.2 Z" fill="#1c1c1c"/></svg>
<div class="a" style="left:43px;top:579px;width:1px;height:21px;background:rgba(255,255,255,.18)"></div>
<div class="t j" style="left:56.5px;top:583px;font-size:12px;color:#dcdcdc;width:58px">说点什么...</div>
<div class="a" style="left:123px;top:579px;width:1px;height:21px;background:rgba(255,255,255,.18)"></div>
<svg style="left:134px;top:584px" width="8" height="10" viewBox="0 0 8 10"><path d="M6.5 1 L2 5 L6.5 9" stroke="#fff" stroke-width="1.6" fill="none"/></svg>

<!-- bottom toolbar -->
<svg style="left:24px;top:684px" width="18" height="24" viewBox="0 0 18 24"><rect x="5" y="0.5" width="8" height="14" rx="4" fill="#3f4042"/><path d="M1.5 11 C1.5 16 4.5 18.5 9 18.5 C13.5 18.5 16.5 16 16.5 11 M9 18.5 V22 M4.5 23 H13.5" stroke="#3f4042" stroke-width="1.8" fill="none"/><path d="M0.8 20.5 L17 2.5" stroke="#fff" stroke-width="3"/><path d="M0.8 20.5 L17 2.5" stroke="#e4473f" stroke-width="1.6"/></svg>
<div class="t j" style="left:11px;top:712px;font-size:11px;color:#222;width:44px">解除静音</div>
<svg style="left:63px;top:701px" width="9" height="6" viewBox="0 0 9 6"><path d="M0.8 5.2 L4.5 1.2 L8.2 5.2" stroke="#333" stroke-width="1.4" fill="none"/></svg>
<svg style="left:94px;top:687px" width="24" height="18" viewBox="0 0 24 18"><rect x="0.5" y="0.5" width="16" height="16" rx="2" fill="#3f4042"/><path d="M17 6.5 L23.5 2.5 V14.5 L17 10.5 Z" fill="#3f4042"/><path d="M1 17.5 L18 0.5" stroke="#fff" stroke-width="3"/><path d="M1 17.5 L18 0.5" stroke="#e4473f" stroke-width="1.6"/></svg>
<div class="t j" style="left:84px;top:712px;font-size:11px;color:#222;width:44px">开启视频</div>
<svg style="left:136px;top:701px" width="9" height="6" viewBox="0 0 9 6"><path d="M0.8 5.2 L4.5 1.2 L8.2 5.2" stroke="#333" stroke-width="1.4" fill="none"/></svg>

<svg style="left:443px;top:685px" width="26" height="22" viewBox="0 0 26 22"><rect x="0" y="0" width="25" height="17" rx="1.5" fill="#23a566"/><rect x="2" y="2" width="21" height="13" fill="#3f4042"/><path d="M8.5 11.5 C9 8.5 11 7 14 7 V5 L17.5 8 L14 11 V9 C12 9 10 9.8 8.5 11.5 Z" fill="#fff"/><rect x="6" y="19.5" width="13" height="2" fill="#3f4042"/></svg>
<div class="t j" style="left:434px;top:712px;font-size:11px;color:#222;width:44px">共享屏幕</div>
<svg style="left:485px;top:701px" width="9" height="6" viewBox="0 0 9 6"><path d="M0.8 5.2 L4.5 1.2 L8.2 5.2" stroke="#333" stroke-width="1.4" fill="none"/></svg>
<svg style="left:516px;top:685px" width="23" height="22" viewBox="0 0 23 22"><circle cx="9" cy="5" r="4.5" fill="#3f4042"/><path d="M0.5 20.5 C0.5 14 4 11 9 11 C13 11 15.5 13 16.5 15 L16 20.5 Z" fill="#3f4042"/><circle cx="17" cy="15.5" r="6" fill="#fff"/><circle cx="17" cy="15.5" r="4.8" fill="#3f4042"/><path d="M17 12.8 V18.2 M14.3 15.5 H19.7" stroke="#fff" stroke-width="1.5"/></svg>
<div class="t j" style="left:515.5px;top:712px;font-size:11px;color:#222;width:22px">邀请</div>
<svg style="left:575px;top:685px" width="24" height="22" viewBox="0 0 24 22"><circle cx="11" cy="5" r="4.5" fill="#3f4042"/><path d="M14.5 1.2 C16.5 2.2 17 5 15.5 7.8" stroke="#3f4042" stroke-width="0.8" fill="none"/><path d="M1 20.5 C1 14 5 11 11 11 C17 11 21 14 21 20.5 Z" fill="#3f4042"/><path d="M18 12.5 C21 14 22.5 17 22.5 20.5" stroke="#3f4042" stroke-width="0.8" fill="none"/></svg>
<div class="t j" style="left:568px;top:712px;font-size:11px;color:#222;width:36px">成员(6)</div>
<svg style="left:635px;top:689px" width="21" height="18" viewBox="0 0 21 18"><path d="M2 0.5 H19 C20 0.5 20.5 1 20.5 2 V13 C20.5 14 20 14.5 19 14.5 H16.5 V17.5 L13.5 14.5 H2 C1 14.5 0.5 14 0.5 13 V2 C0.5 1 1 0.5 2 0.5 Z" fill="#3f4042"/><circle cx="6" cy="7.5" r="1.5" fill="#fff"/><circle cx="10.5" cy="7.5" r="1.5" fill="#fff"/><circle cx="15" cy="7.5" r="1.5" fill="#fff"/></svg>
<div class="t j" style="left:634px;top:712px;font-size:11px;color:#222;width:22px">聊天</div>
<svg style="left:700px;top:685px" width="22" height="22" viewBox="0 0 22 22"><circle cx="11" cy="11" r="10" stroke="#3f4042" stroke-width="1.6" fill="none"/><circle cx="11" cy="11" r="7.8" fill="#3f4042"/></svg>
<div class="t j" style="left:700px;top:712px;font-size:11px;color:#222;width:22px">录制</div>
<svg style="left:768px;top:685px" width="17" height="22" viewBox="0 0 17 22"><g fill="#3f4042"><rect x="1.3" y="6" width="3" height="11" rx="1.5"/><rect x="4.8" y="1.6" width="3" height="13" rx="1.5"/><rect x="8.3" y="0.4" width="3" height="13" rx="1.5"/><rect x="11.8" y="2.6" width="3" height="12" rx="1.5"/><path d="M1.3 12 H14.8 V14 L16.2 11.2 C16.8 10.2 17.5 10.8 17 12 L14.5 18.5 C13.5 20.8 11.5 21.8 9 21.8 H7 C3.5 21.8 1.3 19.5 1.3 16 Z"/></g></svg>
<div class="t j" style="left:767px;top:712px;font-size:11px;color:#222;width:22px">举手</div>
<svg style="left:829px;top:685px" width="21" height="21" viewBox="0 0 21 21"><rect x="0" y="1" width="9" height="9" rx="2" fill="#3f4042"/><path d="M15.5 0.8 L20.2 5.5 L15.5 10.2 L10.8 5.5 Z" stroke="#3f4042" stroke-width="1.3" fill="none"/><rect x="0" y="12" width="9" height="9" rx="2" fill="#3f4042"/><rect x="11" y="12" width="9" height="9" rx="2" fill="#3f4042"/></svg>
<div class="t j" style="left:828px;top:712px;font-size:11px;color:#222;width:22px">应用</div>
<svg style="left:888px;top:685px" width="22" height="22" viewBox="0 0 22 22"><path d="M9 0.5 H13 L13.6 3.3 C14.5 3.6 15.3 4.1 16 4.7 L18.7 3.8 L20.7 7.2 L18.6 9.1 C18.8 10 18.8 11 18.6 11.9 L20.7 13.8 L18.7 17.2 L16 16.3 C15.3 16.9 14.5 17.4 13.6 17.7 L13 20.5 H9 L8.4 17.7 C7.5 17.4 6.7 16.9 6 16.3 L3.3 17.2 L1.3 13.8 L3.4 11.9 C3.2 11 3.2 10 3.4 9.1 L1.3 7.2 L3.3 3.8 L6 4.7 C6.7 4.1 7.5 3.6 8.4 3.3 Z" fill="#3f4042"/><circle cx="11" cy="10.5" r="3.6" fill="#fff"/></svg>
<div class="t j" style="left:887.5px;top:712px;font-size:11px;color:#222;width:22px">设置</div>

<div class="a" style="left:1272px;top:686px;width:76px;height:35px;border:1px solid #e5716c;border-radius:4px;background:#fff"></div>
<div class="t j" style="left:1284px;top:697.5px;font-size:13px;color:#e0524c;width:52px">离开会议</div>

</body>
</html>
